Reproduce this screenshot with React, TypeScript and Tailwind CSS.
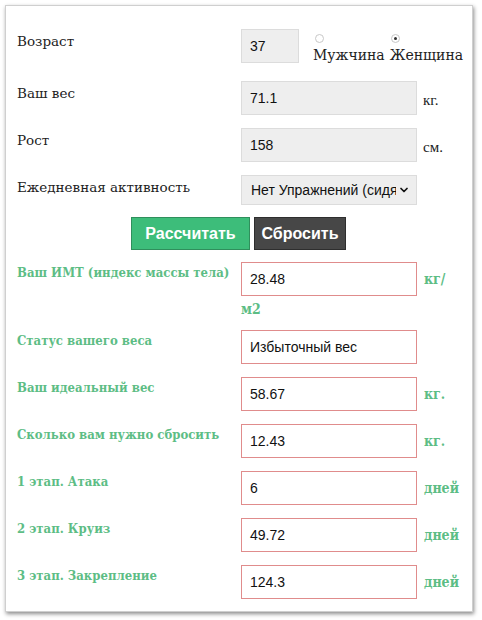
import { ChevronDown } from 'lucide-react'

const serif = { fontFamily: '"DejaVu Serif", "Liberation Serif", serif' }
const boldSerif = { fontFamily: '"DejaVu Serif", "Liberation Serif", serif', fontStretch: 'condensed' as const }

function Radio({ checked }: { checked?: boolean }) {
  return (
    <span className="w-[9px] h-[9px] rounded-full border border-[#c8c8c8] bg-white flex items-center justify-center">
      {checked && <span className="w-[3px] h-[3px] rounded-full bg-[#333]" />}
    </span>
  )
}

function Field({ value, result, className = '' }: { value: string; result?: boolean; className?: string }) {
  return (
    <div
      className={`h-[34px] shrink-0 flex items-center pl-[8px] text-[14px] text-[#111] border ${
        result ? 'bg-white border-[#e08c8c]' : 'bg-[#eeeeee] border-[#dcdcdc]'
      } ${className}`}
      style={{ fontFamily: '"Liberation Sans", Arial, sans-serif' }}
    >
      {value}
    </div>
  )
}

const results = [
  { label: 'Статус вашего веса', value: 'Избыточный вес', unit: '' },
  { label: 'Ваш идеальный вес', value: '58.67', unit: 'кг.' },
  { label: 'Сколько вам нужно сбросить', value: '12.43', unit: 'кг.' },
  { label: '1 этап. Атака', value: '6', unit: 'дней' },
  { label: '2 этап. Круиз', value: '49.72', unit: 'дней' },
  { label: '3 этап. Закрепление', value: '124.3', unit: 'дней' },
]

const labelCls = 'w-[224px] shrink-0 whitespace-nowrap leading-[20px] pt-[2px] text-[13.5px] text-[#222]'
const greenCls = 'w-[224px] shrink-0 whitespace-nowrap leading-[20px] pt-[1px] text-[13px] font-bold text-[#5dbd85]'
const unitCls = 'pl-[7px] pt-[7px] text-[14px] font-bold text-[#5dbd85]'

export default function App() {
  return (
    <div className="w-[482px] h-[620px] bg-white pt-[5px] pl-[5px]">
      <div className="w-[468px] h-[607px] border border-[#cfcfcf] shadow-[1px_2px_4px_rgba(0,0,0,0.45)] bg-white pl-[11px] pt-[23px]">
        {/* Age + sex */}
        <div className="flex items-start">
          <div className={labelCls} style={serif}>Возраст</div>
          <Field value="37" className="w-[58px]" />
          <div className="flex gap-[5px] pl-[14px] pt-[5px] text-[14px] leading-[17px] text-[#222]" style={serif}>
            <div className="flex flex-col items-start">
              <span className="pl-[2px]"><Radio /></span>
              <span className="mt-[4px]">Мужчина</span>
            </div>
            <div className="flex flex-col items-start">
              <span className="pl-[1px]"><Radio checked /></span>
              <span className="mt-[4px]">Женщина</span>
            </div>
          </div>
        </div>

        <div className="flex items-start mt-[17px]">
          <div className={labelCls} style={serif}>Ваш вес</div>
          <Field value="71.1" className="w-[176px]" />
          <div className="pl-[6px] pt-[8px] text-[15px] text-[#222]" style={{ fontFamily: '"Liberation Serif", serif' }}>кг.</div>
        </div>

        <div className="flex items-start mt-[13px]">
          <div className={labelCls} style={serif}>Рост</div>
          <Field value="158" className="w-[176px]" />
          <div className="pl-[6px] pt-[8px] text-[15px] text-[#222]" style={{ fontFamily: '"Liberation Serif", serif' }}>см.</div>
        </div>

        <div className="flex items-start mt-[13px]">
          <div className={labelCls} style={serif}>Ежедневная активность</div>
          <div
            className="w-[176px] h-[30px] flex items-center justify-between pl-[9px] pr-[6px] bg-[#eeeeee] border border-[#dcdcdc] text-[14px] text-[#111] overflow-hidden"
            style={{ fontFamily: '"Liberation Sans", Arial, sans-serif' }}
          >
            <span className="whitespace-nowrap overflow-hidden w-[145px]">Нет Упражнений (сидячий)</span>
            <ChevronDown className="w-[12px] h-[12px] shrink-0" strokeWidth={3.5} />
          </div>
        </div>

        {/* Buttons */}
        <div className="flex gap-[4px] mt-[12px] pl-[114px]" style={{ fontFamily: '"Liberation Sans", Arial, sans-serif' }}>
          <button className="w-[119px] h-[33px] bg-[#3dbd7a] border border-[#2f8f5c] text-white font-bold text-[16px]">Рассчитать</button>
          <button className="w-[92px] h-[33px] bg-[#474747] border border-[#2e2e2e] text-white font-bold text-[16px]">Сбросить</button>
        </div>

        {/* BMI */}
        <div className="flex items-start mt-[12px]">
          <div className={greenCls} style={boldSerif}>Ваш ИМТ (индекс массы тела)</div>
          <Field value="28.48" result className="w-[176px]" />
          <div className={unitCls} style={boldSerif}>кг/</div>
        </div>
        <div className="pl-[224px] mt-[3px] text-[14px] font-bold text-[#5dbd85] leading-[20px]" style={boldSerif}>м2</div>

        {results.map((r, i) => (
          <div key={r.label} className={`flex items-start ${i === 0 ? 'mt-[11px]' : 'mt-[13px]'}`}>
            <div className={greenCls} style={boldSerif}>{r.label}</div>
            <Field value={r.value} result className="w-[176px]" />
            {r.unit && <div className={unitCls} style={boldSerif}>{r.unit}</div>}
          </div>
        ))}
      </div>
    </div>
  )
}
